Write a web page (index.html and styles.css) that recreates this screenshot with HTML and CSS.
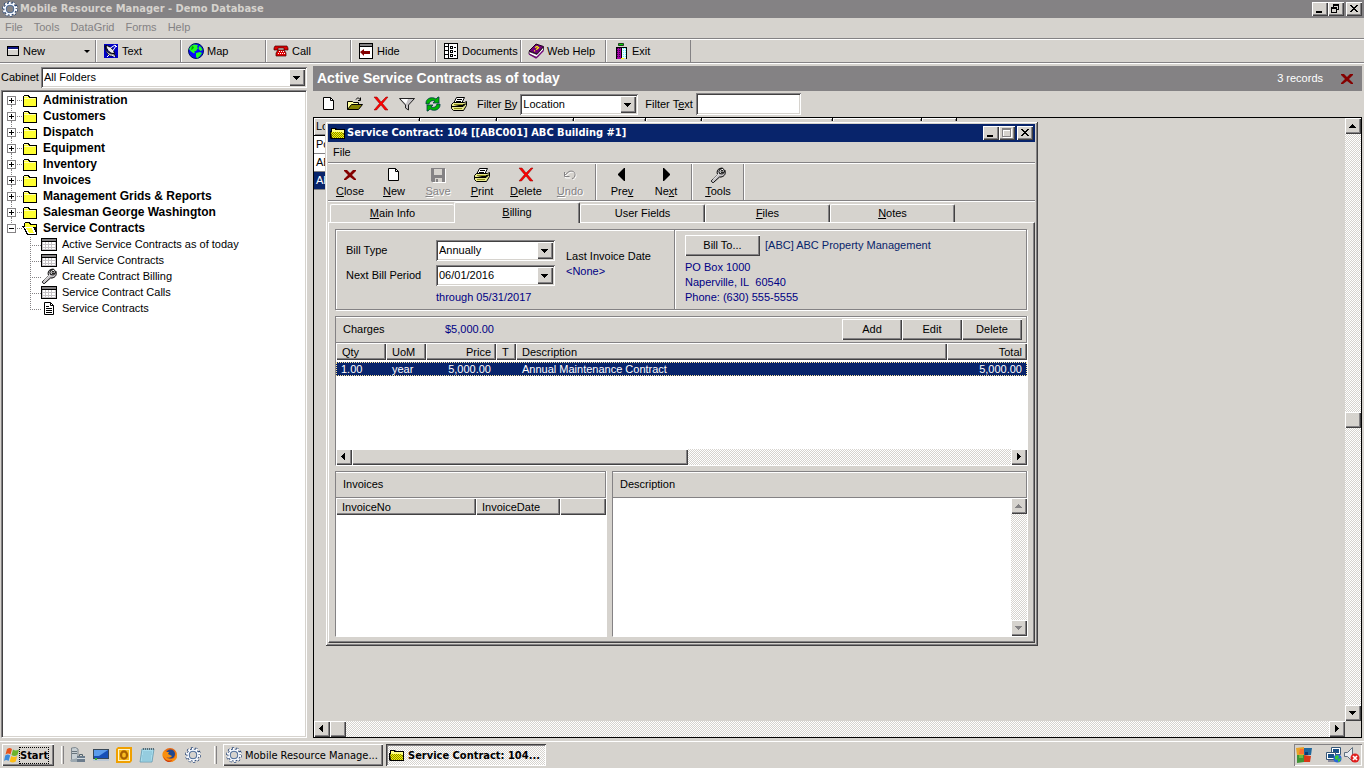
FILE: index.html
```html
<!DOCTYPE html>
<html lang="en">
<head>
  <meta charset="utf-8">
  <meta name="viewport" content="width=device-width, initial-scale=1.0">
  <title>Mobile Resource Manager - Demo Database</title>
  <link rel="stylesheet" href="styles.css">
</head>
<body>
  <!-- icon sprite -->
  <svg class="sprite" aria-hidden="true">
    <defs>
      <pattern id="p-olive" width="2" height="2" patternUnits="userSpaceOnUse">
        <path fill="#ff0" d="M0 0h2v2H0z"/><path fill="#848200" d="M0 0h1v1H0zM1 1h1v1H1z"/>
      </pattern>
    </defs>
    <symbol id="i-gear" viewBox="0 0 16 16">
      <circle cx="8" cy="8" r="6.7" fill="none" stroke="#18386b" stroke-width="2.4" stroke-dasharray="2.1 2.1"/>
      <circle cx="8" cy="8" r="5" fill="none" stroke="#18386b" stroke-width="3"/>
      <circle cx="8" cy="8" r="6" fill="none" stroke="#fff" stroke-width="2.6" stroke-dasharray="1.9 1.87"/>
      <circle cx="8" cy="8" r="4.9" fill="none" stroke="#f4f8ff" stroke-width="1.6"/>
      <circle cx="8" cy="8" r="3.8" fill="none" stroke="#5a7aa5" stroke-width=".8"/>
    </symbol>
    <symbol id="i-folder" viewBox="0 0 16 16">
      <path d="M2 3h5v1h1v1h7v10H1V4h1z"/>
      <path fill="#ffff31" d="M2 4h4v1h1v1h7v8H2z"/>
      <path fill="#ffffb5" d="M2 4h4v1H2zM2 6h11v1H2z"/>
    </symbol>
    <symbol id="i-folder-open" viewBox="0 0 16 16">
      <path d="M3 2h5v1h1v1h6v11H5v-1H4v-2H3v-2H2V8H1V7H0V6h2V3h1z"/>
      <path fill="#ffff31" d="M3 3h4v1h1v1h6v2H3z"/>
      <path fill="#fff" d="M2 7h9v1h1v2h1v2h1v2H6v-1H5v-2H4V9H3V8H2z"/>
      <path fill="#ffff31" d="M4 8h6v2h1v2h1v1H7v-1H6v-2H5V9H4z"/>
      <path d="M12 7h1v2h1v2h-1v-1h-1z"/>
    </symbol>
    <symbol id="i-folder-win" viewBox="0 0 16 16">
      <path d="M1 3h5l1 1h8v10H1L0 13V6h1z"/>
      <path fill="#ffff84" d="M2 4h3v1h9v3H2z"/>
      <path fill="url(#p-olive)" d="M1 7h11l2 2v4H2z"/>
    </symbol>
    <symbol id="i-grid" viewBox="0 0 16 16">
      <path d="M0 2h16v13H0z"/><path fill="#848284" d="M1 3h14v2H1z"/>
      <path fill="#c6c3c6" d="M1 6h14v8H1z"/>
      <path fill="#fff" d="M2 6h2v2H2zM5 6h2v2H5zM8 6h2v2H8zM11 6h3v2h-3zM2 9h2v2H2zM5 9h2v2H5zM8 9h2v2H8zM11 9h3v2h-3zM2 12h2v1H2zM5 12h2v1H5zM8 12h2v1H8zM11 12h3v1h-3z"/>
    </symbol>
    <symbol id="i-wrench" viewBox="0 0 16 16">
      <path fill="#c6c3c6" stroke="#000" d="M1.500 13.500l6-6c-1-3 0-5 2-6l3-.5-2 2.500 1 2 2 .5 1.500-2.500c1 3-.5 6-4 6.500h-1.500l-6 5.500c-1 .5-2.500-1-2-2z"/>
      <path stroke="#fff" d="M3 12.500l6-6"/>
      <path fill="#fff" stroke="#000" d="M9.500 2.500l3-1 1.500 1 .5 2-2 2.500-3-.5-.5-2z"/>
      <path fill="#d6d3ce" stroke="#000" stroke-width=".8" d="M11 3.500h2v2h-2z"/>
    </symbol>
    <symbol id="i-doc" viewBox="0 0 16 16">
      <path fill="#fff" stroke="#000" d="M3.500 2.500h6l3 3v9h-9z"/><path fill="none" stroke="#000" d="M9.500 2.500v3h3M5 6.500h3M5 8.500h6M5 10.500h6M5 12.500h6"/>
    </symbol>
    <symbol id="i-window" viewBox="0 0 16 16">
      <path d="M1 3h12v10H1z"/><path fill="#101884" d="M2 4h10v2H2z"/><path fill="#d6d3ce" d="M2 6h10v6H2z"/><path fill="#fff" d="M2 6h10v1H2z"/>
    </symbol>
    <symbol id="i-dish" viewBox="0 0 16 16">
      <path fill="#0000c6" d="M1 1h14v14H1z"/>
      <path fill="#c6c3c6" stroke="#000" stroke-width=".7" d="M2 2.500c0 5 4 9 9 8.500L13 13H7c-3-2-5-6-5-10.500z"/>
      <path fill="#e8e8e8" stroke="#000" d="M3 2.500c4 .5 8 4 8.500 8-4 .5-8-3-8.500-8z"/>
      <path fill="none" stroke="#fff" d="M6 6l6-4M9 9l4-6M12 2l2 2M6 12l-2 2M9 12l3 2"/>
    </symbol>
    <symbol id="i-globe" viewBox="0 0 16 16">
      <circle cx="8" cy="8" r="7.500" fill="#0808ff" stroke="#001060" stroke-width="1"/>
      <path fill="#21ff21" d="M3 3l3-1.500 4 .5-1 2 1 1-2 3-2 .5 1 1-1 1-3-2L1 6zM11 3l2 1 1.500 3-2 1-2-2zM8 10l4-1 2 1-2 3-3 2.500-1-2z"/>
      <path fill="#00a200" d="M4 3l2 1-1 2-2 1z"/>
    </symbol>
    <symbol id="i-phone" viewBox="0 0 16 16">
      <path fill="#e00000" stroke="#400" stroke-width=".7" d="M2 3h12l1 2v2h-4V5H5v2H1V5zM5 7h6l2 3v3H3v-3z"/>
      <path fill="#fff" d="M6 8h1v1H6zM8 8h1v1H8zM10 8h1v1h-1zM5 10h1v1H5zM7 10h1v1H7zM9 10h1v1H9zM11 10h1v1h-1z"/>
    </symbol>
    <symbol id="i-hide" viewBox="0 0 16 16">
      <path d="M1 0h14v16H1z"/><path fill="#848284" d="M2 1h12v2H2z"/><path fill="#fff" d="M2 4h12v11H2z"/>
      <path fill="#840000" d="M2 9l4-3v2h6v3H6v2z"/>
    </symbol>
    <symbol id="i-docs" viewBox="0 0 16 16">
      <path d="M1 0h14v16H1z"/><path fill="#fff" d="M2 1h3v14H2zM6 1h8v14H6z"/>
      <path d="M2 3h3v1H2zM2 7h3v1H2zM2 11h3v1H2zM7 3h3v3H7zM7 7h3v3H7zM7 11h3v3H7zM11 4h2v1h-2zM11 8h2v1h-2zM11 12h2v1h-2z"/>
      <path fill="#fff" d="M8 4h1v1H8zM8 8h1v1H8zM8 12h1v1H8z"/>
    </symbol>
    <symbol id="i-book" viewBox="0 0 16 16">
      <path fill="#73007b" stroke="#200020" d="M8 1l7.500 2.500L9 11 1 8z"/>
      <path fill="#fff" stroke="#200020" stroke-width=".8" d="M1 8.500l8 3 6.500-7.500v3L9 14.500 1 11z"/>
      <path fill="none" stroke="#73007b" stroke-width="1.200" d="M1 11l7 4 7.500-7.500"/>
      <path fill="none" stroke="#ff0" stroke-width="1.300" d="M7 4.500l2-1 1.500 1-1.500 1.500-1 .5M7 7.500l-.8.8"/>
    </symbol>
    <symbol id="i-exit" viewBox="0 0 16 16">
      <path fill="#00d600" stroke="#000" stroke-width=".7" d="M5.500 .5h5v2h-5z"/><path d="M3 4h11v12h-1V5H4v11H3z"/>
      <path fill="#a500a5" d="M4 5h4v11H4z"/><path fill="#e7ffff" d="M9 5h4v10H9z"/><path d="M8 5h1v11H8z"/>
      <path stroke="#31004a" stroke-dasharray="1 1" d="M4.500 5v10M6.500 5v10"/><path stroke="#63efff" stroke-dasharray="1 1" d="M10.500 5v10M12.500 5v10"/>
      <path fill="#ff0" d="M8 15h3v1H8z"/>
    </symbol>
    <symbol id="i-new" viewBox="0 0 16 16">
      <path fill="#fff" stroke="#000" d="M2.500 1.500h7l3 3v9h-10z"/><path fill="none" stroke="#000" d="M9.500 1.500v3h3"/>
    </symbol>
    <symbol id="i-open" viewBox="0 0 16 16">
      <path fill="#ffff9c" stroke="#000" d="M.5 13.500v-8h5l1 1h5v2"/>
      <path fill="#848200" stroke="#000" d="M.5 13.500l4-5h11l-4 5z"/>
      <path fill="none" stroke="#000" d="M9 3.500c1-2 3-2 4.500.5M13.500 1.500V4.500H11"/>
    </symbol>
    <symbol id="i-delete" viewBox="0 0 16 16">
      <path fill="#f00" stroke="#840000" stroke-width=".5" d="M1 1h3l4 5 5-5h2L9.500 7.500 15 14h-3L8 9l-4.500 5H1l5.500-6.500z"/>
    </symbol>
    <symbol id="i-close" viewBox="0 0 16 16">
      <path fill="#840000" d="M2 3h3l3 3 3-3h3v1l-4 4 4 4v1h-2L8 10l-4 3H2v-1l4-4-4-4z"/>
    </symbol>
    <symbol id="i-funnel" viewBox="0 0 16 16">
      <path fill="#c6c3c6" stroke="#212021" d="M.5 2.500h15l-6 6.500v5l-3-2V9z"/><path fill="#fff" d="M2 3h7l-2 5z"/>
    </symbol>
    <symbol id="i-refresh" viewBox="0 0 16 16">
      <path fill="#00b200" stroke="#003848" stroke-width=".8" d="M1 7c0-4 4-6 8-5l2 1 2-2h1v6H8l2-2C7 4 5 5 4 8H1zM15 9c0 4-4 6-8 5l-2-1-2 2H2V9h6l-2 2c3 1 5 0 6-3h3z"/>
    </symbol>
    <symbol id="i-print" viewBox="0 0 16 16">
      <path fill="#fff" stroke="#000" d="M5.500 1.500h8l-3 6h-8z"/><path stroke="#000" d="M6 3.500h5M5 5.500h5"/>
      <path fill="#e7e78c" stroke="#000" d="M.5 8.500l2-2h11l2-1v4l-3 5H2.500l-2-2z"/>
      <path stroke="#000" d="M1 10.500h11l3-3"/><path stroke="#8c8c18" d="M3 8.500h9M3 12.500h8"/>
    </symbol>
    <symbol id="i-save" viewBox="0 0 16 16">
      <path fill="#fff" d="M2 2h14v14H3z"/><path fill="#848284" d="M1 1h14v14H2l-1-1z"/>
      <path fill="#d6d3ce" d="M4 2h8v6H4zM5 11h7v4H5z"/><path fill="#848284" d="M6 12h2v3H6z"/>
    </symbol>
    <symbol id="i-undo" viewBox="0 0 16 16">
      <path fill="none" stroke="#fff" d="M4 9l4-3.500c3-1 6 0 6 3 0 2-1 4-3 4M3.500 6v5h5"/>
      <path fill="none" stroke="#848284" d="M3 8l4-3.500c3-1 6 0 6 3 0 2-1 4-3 4M2.500 5v4.500h5"/>
    </symbol>
    <symbol id="i-prev" viewBox="0 0 16 16"><path d="M11 1v13h-1L4 8V7l6-6z"/></symbol>
    <symbol id="i-next" viewBox="0 0 16 16"><path d="M5 1v13h1l6-6V7L6 1z"/></symbol>
    <symbol id="i-flag" viewBox="0 0 16 16">
      <path fill="#e8541c" d="M3 2c2-1.500 3-1.500 5 0L6.500 7.500c-2-1.300-3-1.300-5 0z"/>
      <path fill="#6cb42c" d="M9 2.500c2 1.300 3.500 1.300 6 0L13.500 8c-2 1.300-4 1.300-6 0z"/>
      <path fill="#3c8cdc" d="M1.200 8.500c2-1.300 3-1.300 5 0L4.500 14c-2-1.300-2.500-1.300-4.500 0z"/>
      <path fill="#fcbc14" d="M7.200 9c2 1.300 3.500 1.300 6 0l-1.500 5.500c-2 1.300-4 1.300-6 0z"/>
    </symbol>
    <symbol id="i-server" viewBox="0 0 16 16">
      <path fill="#c8d0d4" stroke="#68747c" stroke-width=".8" d="M1.500 1l4-.5L8 2v10l-5 1.500-1.500-1z"/>
      <path stroke="#68747c" d="M2 4.500h5M2 6.500h5"/><path fill="#9ca8b0" d="M0 13l8-2v4H1z"/>
      <path fill="#6c7c8c" d="M7 9h8v6H7z"/><path fill="none" stroke="#54646c" d="M9.500 9V7.500h3V9"/><path fill="#d4dce0" d="M7 11h8v1H7z"/>
    </symbol>
    <symbol id="i-desktop" viewBox="0 0 16 16">
      <path fill="#384858" d="M0 2h16v12H0z"/><path fill="#1850b8" d="M1 3h14v8H1z"/><path fill="#5c9cec" d="M1 3h14L6 9H1z"/>
      <path fill="#bcc8d4" d="M0 12h16v2H0z"/><path fill="#3cb43c" d="M2 11h2v2H2z"/>
    </symbol>
    <symbol id="i-outlook" viewBox="0 0 16 16">
      <path fill="#f0a000" d="M2 0h14v14l-2 2H0V2z"/><path fill="#fff4c8" d="M2 2h12v12H2z"/><path fill="#f8bc20" d="M3 3h10v10H3z"/>
      <ellipse cx="8" cy="8" rx="3" ry="3.600" fill="none" stroke="#a86000" stroke-width="2.200"/>
    </symbol>
    <symbol id="i-notepad" viewBox="0 0 16 16">
      <path fill="#a8dcec" stroke="#6098b0" stroke-width=".8" d="M3 2h12l-2 13H1z"/><path stroke="#78b4cc" stroke-width=".8" d="M4 5h9M4 7h9M3 9h9M3 11h9M3 13h9"/>
      <path stroke="#586870" stroke-dasharray="1 1" stroke-width="2" d="M4 2h11"/>
    </symbol>
    <symbol id="i-firefox" viewBox="0 0 16 16">
      <circle cx="8" cy="8" r="7" fill="#e86810"/><circle cx="8.500" cy="7" r="4.500" fill="#204890"/>
      <path fill="#f89010" d="M1 5l2-2 1 2 3 0-1 2 4 2c-1 2-4 2-6 1 2 3 7 3 9 0 1-2 1-4 0-6 2 2 3 5 1 8-3 4-9 4-12 0-2-2-2-5-1-7z"/>
      <path fill="#c83010" d="M1.500 9c1 4 5 6 9 4-2 2.500-5 2.500-7 .5-1-1-2-3-2-4.500z"/>
    </symbol>
    <symbol id="i-puzzle" viewBox="0 0 16 16">
      <path fill="#e8a428" d="M0 1l8-1v8H1z"/><path fill="#20689c" d="M8 1h8l-1 7H8z"/><path fill="#409434" d="M1 8h7v7l-7 1z"/><path fill="#d83818" d="M8 8l7 1-1 6H8z"/>
      <path fill="#f87030" d="M4 2h4v5L3 7z"/><path fill="#70b840" d="M3 8h4v3H3z"/><path fill="#103870" d="M9 5h3v3H9z"/>
    </symbol>
    <symbol id="i-network" viewBox="0 0 16 16">
      <path fill="#fff" stroke="#385878" d="M5.500.5h9v7h-9z"/><path fill="#185088" d="M7 2h6v4H7z"/>
      <path fill="#fff" stroke="#385878" d="M.5 5.500h9v7h-9z"/><path fill="#185088" d="M2 7h6v4H2z"/><path fill="#889" d="M2 13h7v2H2z"/>
      <circle cx="11.500" cy="11.500" r="4" fill="#2868d8"/><path fill="#38c838" d="M9 9l3-1 1 2-2 3-2-1zM12 12l3-1-1 3-2 1z"/>
    </symbol>
    <symbol id="i-mute" viewBox="0 0 16 16">
      <path fill="#e8ecf0" stroke="#607080" d="M.5 5.500h3l5-5v14l-5-5h-3z"/>
      <circle cx="11" cy="11" r="4.500" fill="#e02020"/><path stroke="#fff" stroke-width="1.700" d="M9 9l4 4M13 9l-4 4"/>
    </symbol>
    <symbol id="i-min" viewBox="0 0 16 14"><path d="M4 9h6v2H4z"/></symbol>
    <symbol id="i-max" viewBox="0 0 16 14"><path fill="#fff" fill-rule="evenodd" d="M4 3h9v9H4zM5 5v6h7V5z"/><path fill="#848284" fill-rule="evenodd" d="M3 2h9v9H3zM4 4v6h7V4z"/></symbol>
    <symbol id="i-restore" viewBox="0 0 16 14"><path fill-rule="evenodd" d="M5 2h6v6H9v3H3V5h2zM6 4v1h3v2h1V4zM4 7v3h4V7z"/></symbol>
    <symbol id="i-x" viewBox="0 0 16 14"><path d="M4 3h2v1h1v1h2V4h1V3h2v1h-1v1h-1v1H9v1h1v1h1v1h1v1h-2V9H9V8H7v1H6v1H4V9h1V8h1V7h1V6H6V5H5V4H4z"/></symbol>
    <symbol id="i-up" viewBox="0 0 16 16"><path d="M7 6h1v1h1v1h1v1h1v1H4V9h1V8h1V7h1z"/></symbol>
    <symbol id="i-down" viewBox="0 0 16 16"><path d="M4 6h7v1h-1v1H9v1H8v1H7V9H6V8H5V7H4z"/></symbol>
    <symbol id="i-left" viewBox="0 0 16 16"><path d="M9 4v7H8v-1H7V9H6V8H5V7h1V6h1V5h1V4z"/></symbol>
    <symbol id="i-right" viewBox="0 0 16 16"><path d="M6 4v7h1v-1h1V9h1V8h1V7H9V6H8V5H7V4z"/></symbol>
  </svg>

  <div class="app">
    <header class="titlebar inactive">
      <svg class="icon"><use href="#i-gear"/></svg>
      <h1>Mobile Resource Manager - Demo Database</h1>
      <div class="win-buttons">
        <button class="win-btn" aria-label="Minimize"><svg><use href="#i-min"/></svg></button>
        <button class="win-btn" aria-label="Restore"><svg><use href="#i-restore"/></svg></button>
        <button class="win-btn close" aria-label="Close"><svg><use href="#i-x"/></svg></button>
      </div>
    </header>

    <nav class="menubar disabled">
      <a href="#">File</a><a href="#">Tools</a><a href="#">DataGrid</a><a href="#">Forms</a><a href="#">Help</a>
    </nav>

    <div class="main-toolbar">
      <button class="tool first"><svg class="icon"><use href="#i-window"/></svg>New<span class="caret"></span></button>
      <button class="tool"><svg class="icon"><use href="#i-dish"/></svg>Text</button>
      <button class="tool"><svg class="icon"><use href="#i-globe"/></svg>Map</button>
      <button class="tool"><svg class="icon"><use href="#i-phone"/></svg>Call</button>
      <button class="tool"><svg class="icon"><use href="#i-hide"/></svg>Hide</button>
      <button class="tool"><svg class="icon"><use href="#i-docs"/></svg>Documents</button>
      <button class="tool"><svg class="icon"><use href="#i-book"/></svg>Web Help</button>
      <button class="tool"><svg class="icon"><use href="#i-exit"/></svg>Exit</button>
    </div>

    <div class="workspace">
      <aside class="sidebar">
        <div class="cabinet">
          <label for="cabinet">Cabinet</label>
          <span class="combo"><select id="cabinet"><option>All Folders</option></select></span>
        </div>
        <ul class="tree">
          <li><span class="node"><i class="expander plus"></i><svg class="icon"><use href="#i-folder"/></svg>Administration</span></li>
          <li><span class="node"><i class="expander plus"></i><svg class="icon"><use href="#i-folder"/></svg>Customers</span></li>
          <li><span class="node"><i class="expander plus"></i><svg class="icon"><use href="#i-folder"/></svg>Dispatch</span></li>
          <li><span class="node"><i class="expander plus"></i><svg class="icon"><use href="#i-folder"/></svg>Equipment</span></li>
          <li><span class="node"><i class="expander plus"></i><svg class="icon"><use href="#i-folder"/></svg>Inventory</span></li>
          <li><span class="node"><i class="expander plus"></i><svg class="icon"><use href="#i-folder"/></svg>Invoices</span></li>
          <li><span class="node"><i class="expander plus"></i><svg class="icon"><use href="#i-folder"/></svg>Management Grids &amp; Reports</span></li>
          <li><span class="node"><i class="expander plus"></i><svg class="icon"><use href="#i-folder"/></svg>Salesman George Washington</span></li>
          <li><span class="node"><i class="expander"></i><svg class="icon"><use href="#i-folder-open"/></svg>Service Contracts</span>
            <ul>
              <li><svg class="icon"><use href="#i-grid"/></svg>Active Service Contracts as of today</li>
              <li><svg class="icon"><use href="#i-grid"/></svg>All Service Contracts</li>
              <li><svg class="icon"><use href="#i-wrench"/></svg>Create Contract Billing</li>
              <li><svg class="icon"><use href="#i-grid"/></svg>Service Contract Calls</li>
              <li><svg class="icon"><use href="#i-doc"/></svg>Service Contracts</li>
            </ul>
          </li>
        </ul>
      </aside>

      <main class="content">
        <div class="content-header">
          <h2>Active Service Contracts as of today</h2>
          <span>3 records</span>
          <button class="flat" aria-label="Close list"><svg class="icon"><use href="#i-close"/></svg></button>
        </div>
        <div class="filter-bar">
          <button class="flat" aria-label="New"><svg class="icon"><use href="#i-new"/></svg></button>
          <button class="flat" aria-label="Open"><svg class="icon"><use href="#i-open"/></svg></button>
          <button class="flat" aria-label="Delete"><svg class="icon"><use href="#i-delete"/></svg></button>
          <button class="flat" aria-label="Filter"><svg class="icon"><use href="#i-funnel"/></svg></button>
          <button class="flat" aria-label="Refresh"><svg class="icon"><use href="#i-refresh"/></svg></button>
          <button class="flat" aria-label="Print"><svg class="icon"><use href="#i-print"/></svg></button>
          <label for="filter-by">Filter <u>B</u>y</label>
          <span class="combo"><select id="filter-by"><option>Location</option></select></span>
          <label for="filter-text">Filter T<u>e</u>xt</label>
          <input type="text" id="filter-text">
        </div>
        <div class="grid-frame">
          <div class="grid-view">
            <table class="list">
              <colgroup><col class="w106"><col class="w77"><col class="w77"><col class="w72"><col class="w56"><col class="w131"><col class="w89"><col class="w35"></colgroup>
              <thead><tr><th>Lo</th><th></th><th></th><th></th><th></th><th></th><th></th><th></th></tr></thead>
              <tbody>
                <tr><td>Po</td><td></td><td></td><td></td><td></td><td></td><td></td><td></td></tr>
                <tr><td>AB</td><td></td><td></td><td></td><td></td><td></td><td></td><td></td></tr>
                <tr class="selected"><td>AB</td><td></td><td></td><td></td><td></td><td></td><td></td><td></td></tr>
              </tbody>
            </table>
          </div>
          <div class="scroll vertical">
            <button aria-label="Scroll up"><svg><use href="#i-up"/></svg></button>
            <span class="thumb"></span>
            <button aria-label="Scroll down"><svg><use href="#i-down"/></svg></button>
          </div>
          <div class="scroll horizontal">
            <button aria-label="Scroll left"><svg><use href="#i-left"/></svg></button>
            <span class="thumb"></span>
            <button class="end" aria-label="Scroll right"><svg><use href="#i-right"/></svg></button>
          </div>
        </div>
      </main>
    </div>

    <footer class="taskbar">
      <button class="start raised"><svg class="icon"><use href="#i-flag"/></svg><span>Start</span></button>
      <i class="grip"></i>
      <div class="quick">
        <a href="#" aria-label="Server Manager"><svg class="icon"><use href="#i-server"/></svg></a>
        <a href="#" aria-label="Show Desktop"><svg class="icon"><use href="#i-desktop"/></svg></a>
        <a href="#" aria-label="Outlook"><svg class="icon"><use href="#i-outlook"/></svg></a>
        <a href="#" aria-label="Notepad"><svg class="icon"><use href="#i-notepad"/></svg></a>
        <a href="#" aria-label="Firefox"><svg class="icon"><use href="#i-firefox"/></svg></a>
        <a href="#" aria-label="Mobile Resource Manager"><svg class="icon"><use href="#i-gear"/></svg></a>
      </div>
      <i class="grip"></i>
      <button class="task raised"><svg class="icon"><use href="#i-gear"/></svg>Mobile Resource Manage...</button>
      <button class="task active"><svg class="icon"><use href="#i-folder-win"/></svg>Service Contract: 104...</button>
      <div class="tray">
        <svg class="icon"><use href="#i-puzzle"/></svg>
        <svg class="icon"><use href="#i-network"/></svg>
        <svg class="icon"><use href="#i-mute"/></svg>
      </div>
    </footer>

    <!-- service contract window -->
    <section class="dialog">
      <header class="titlebar">
        <svg class="icon"><use href="#i-folder-win"/></svg>
        <h2>Service Contract: 104 [[ABC001] ABC Building #1]</h2>
        <div class="win-buttons">
          <button class="win-btn" aria-label="Minimize"><svg><use href="#i-min"/></svg></button>
          <button class="win-btn" aria-label="Maximize" disabled><svg><use href="#i-max"/></svg></button>
          <button class="win-btn close" aria-label="Close"><svg><use href="#i-x"/></svg></button>
        </div>
      </header>
      <nav class="menubar"><a href="#">File</a></nav>
      <div class="dialog-toolbar">
        <div class="group">
          <button><svg class="icon"><use href="#i-close"/></svg><span><u>C</u>lose</span></button>
          <button><svg class="icon"><use href="#i-new"/></svg><span><u>N</u>ew</span></button>
          <button disabled><svg class="icon"><use href="#i-save"/></svg><span><u>S</u>ave</span></button>
          <button><svg class="icon"><use href="#i-print"/></svg><span><u>P</u>rint</span></button>
          <button><svg class="icon"><use href="#i-delete"/></svg><span><u>D</u>elete</span></button>
          <button disabled><svg class="icon"><use href="#i-undo"/></svg><span><u>U</u>ndo</span></button>
        </div>
        <div class="group">
          <button><svg class="icon"><use href="#i-prev"/></svg><span>Pre<u>v</u></span></button>
          <button><svg class="icon"><use href="#i-next"/></svg><span>Ne<u>x</u>t</span></button>
        </div>
        <div class="group">
          <button><svg class="icon"><use href="#i-wrench"/></svg><span><u>T</u>ools</span></button>
        </div>
      </div>

      <div class="tabs" role="tablist">
        <button role="tab"><u>M</u>ain Info</button>
        <button role="tab" class="active" aria-selected="true"><u>B</u>illing</button>
        <button role="tab">User Fields</button>
        <button role="tab"><u>F</u>iles</button>
        <button role="tab"><u>N</u>otes</button>
      </div>

      <div class="page">
        <div class="billing etched">
          <div class="bill-form">
            <label for="bill-type">Bill Type</label>
            <span class="combo"><select id="bill-type"><option>Annually</option></select></span>
            <label for="bill-period">Next Bill Period</label>
            <span class="combo"><select id="bill-period"><option>06/01/2016</option></select></span>
            <span class="through value">through 05/31/2017</span>
          </div>
          <div class="last-invoice">
            <div>Last Invoice Date</div>
            <div class="value">&lt;None&gt;</div>
          </div>
          <div class="bill-to">
            <div class="customer"><button class="raised">Bill To...</button><a href="#">[ABC] ABC Property Management</a></div>
            <address class="value">PO Box 1000<br>Naperville, IL&nbsp; 60540<br>Phone: (630) 555-5555</address>
          </div>
        </div>

        <div class="panel charges">
          <div class="panel-head">
            <span class="caption">Charges</span>
            <span class="value">$5,000.00</span>
            <div class="actions">
              <button class="raised">Add</button><button class="raised">Edit</button><button class="raised">Delete</button>
            </div>
          </div>
          <div class="panel-body">
            <table class="lines">
              <colgroup><col class="w50"><col class="w40"><col class="w70"><col class="w20"><col><col class="w80"></colgroup>
              <thead><tr><th>Qty</th><th>UoM</th><th class="num">Price</th><th>T</th><th>Description</th><th class="num">Total</th></tr></thead>
              <tbody><tr><td class="qty">1.00</td><td>year</td><td class="num">5,000.00</td><td></td><td>Annual Maintenance Contract</td><td class="num">5,000.00</td></tr></tbody>
            </table>
          </div>
          <div class="scroll horizontal">
            <button aria-label="Scroll left"><svg><use href="#i-left"/></svg></button>
            <span class="thumb wide"></span>
            <button class="end" aria-label="Scroll right"><svg><use href="#i-right"/></svg></button>
          </div>
        </div>

        <div class="bottom">
          <div class="panel invoices">
            <div class="panel-head"><span class="caption">Invoices</span></div>
            <div class="panel-body">
              <table class="lines">
                <colgroup><col class="w140"><col class="w84"><col></colgroup>
                <thead><tr><th>InvoiceNo</th><th>InvoiceDate</th><th></th></tr></thead>
              </table>
            </div>
          </div>
          <div class="panel notes">
            <div class="panel-head"><label class="caption" for="description">Description</label></div>
            <div class="panel-body memo">
              <textarea id="description"></textarea>
              <div class="scroll vertical">
                <button aria-label="Scroll up" disabled><svg><use href="#i-up"/></svg></button>
                <button aria-label="Scroll down" disabled><svg><use href="#i-down"/></svg></button>
              </div>
            </div>
          </div>
        </div>
      </div>
    </section>
  </div>
</body>
</html>
```
FILE: styles.css
```css
:root {
  --face: #d6d3ce;
  --shadow: #848284;
  --dark: #424142;
  --navy: #08246b;
  --blue: #000084;
  --ui: "Liberation Sans", Arial, sans-serif;
  --caption: "DejaVu Sans Condensed", "DejaVu Sans", Tahoma, sans-serif;
  --raised: inset 1px 1px #fff, inset -1px -1px var(--dark), inset -2px -2px var(--shadow);
  --dither: repeating-conic-gradient(#fff 0 25%, var(--face) 0 50%) 0 0 / 2px 2px;
}

* {
  box-sizing: border-box;
}

body {
  margin: 0;
  background: var(--face);
  color: #000;
  font: 11px/15px var(--ui);
}

h1, h2 {
  margin: 0;
  font-size: 11px;
}

ul {
  list-style: none;
  margin: 0;
  padding: 0;
}

a {
  color: inherit;
  text-decoration: none;
}

button, select, input, textarea {
  margin: 0;
  padding: 0;
  border: 0;
  border-radius: 0;
  font: inherit;
  color: inherit;
  background: var(--face);
}

.sprite {
  position: absolute;
  width: 0;
  height: 0;
}

svg {
  display: block;
}

.icon {
  width: 16px;
  height: 16px;
  flex: none;
}

.raised {
  background: var(--face);
  box-shadow: var(--raised);
}

.value {
  color: var(--blue);
}

.app {
  position: relative;
  display: flex;
  flex-direction: column;
  height: 100vh;
  overflow: hidden;
}

/* title bars */
.titlebar {
  display: flex;
  align-items: center;
  gap: 2px;
  height: 18px;
  padding: 0 2px;
  background: var(--navy);
  color: #fff;
}

.titlebar h1, .titlebar h2 {
  flex: 1;
  font: bold 11px/18px var(--caption);
  white-space: nowrap;
}

.titlebar.inactive {
  background: var(--shadow);
  color: var(--face);
}

.win-buttons {
  display: flex;
}

.win-btn {
  width: 16px;
  height: 14px;
  box-shadow: var(--raised);
}

.win-btn.close {
  margin-left: 2px;
}

.win-btn svg {
  width: 16px;
  height: 14px;
}

/* menus */
.menubar {
  display: flex;
  gap: 11px;
  height: 20px;
  padding: 0 5px;
  line-height: 20px;
}

.menubar.disabled {
  color: var(--shadow);
  line-height: 18px;
}

/* main toolbar */
.main-toolbar {
  display: flex;
  height: 26px;
  border-top: 1px solid var(--shadow);
  border-bottom: 1px solid #fff;
  box-shadow: inset 0 1px #fff, inset 0 -1px var(--shadow);
  padding: 1px 0;
}

.tool {
  display: flex;
  align-items: center;
  gap: 3px;
  width: 85px;
  padding-left: 6px;
  border-left: 1px solid #fff;
  border-right: 1px solid var(--shadow);
  text-align: left;
  white-space: nowrap;
}

.tool.first {
  gap: 1px;
  width: 96px;
  border-left: 0;
}

.caret {
  margin-left: auto;
  margin-right: 5px;
  border: 3px solid transparent;
  border-top-color: #000;
  border-bottom: 0;
}

/* drop-downs */
.combo {
  position: relative;
  display: flex;
  height: 21px;
}

.combo select, .filter-bar input {
  appearance: none;
  width: 100%;
  height: 100%;
  padding: 0 3px;
  background: #fff;
  box-shadow: inset 1px 1px var(--shadow), inset -1px -1px #fff, inset 2px 2px var(--dark), inset -2px -2px var(--face);
}

.combo::after {
  content: "";
  position: absolute;
  top: 2px;
  right: 2px;
  bottom: 2px;
  width: 16px;
  background: linear-gradient(#000, #000) 4px 7px / 7px 1px no-repeat,
    linear-gradient(#000, #000) 5px 8px / 5px 1px no-repeat,
    linear-gradient(#000, #000) 6px 9px / 3px 1px no-repeat,
    linear-gradient(#000, #000) 7px 10px / 1px 1px no-repeat,
    var(--face);
  box-shadow: var(--raised);
  pointer-events: none;
}

/* layout */
.workspace {
  display: flex;
  flex: 1;
  gap: 6px;
  min-height: 0;
  padding: 2px 2px 2px 1px;
}

.sidebar {
  display: flex;
  flex-direction: column;
  width: 306px;
  padding-top: 1px;
  gap: 2px;
}

.cabinet {
  display: flex;
  align-items: center;
}

.cabinet label {
  width: 40px;
}

.cabinet .combo {
  flex: 1;
}

.tree {
  flex: 1;
  padding-left: 4px;
  background: #fff;
  border: 1px solid;
  border-color: var(--shadow) #fff #fff var(--shadow);
  box-shadow: inset 1px 1px var(--dark), inset -1px -1px var(--face);
}

.tree li {
  position: relative;
  line-height: 16px;
  white-space: nowrap;
}

.node {
  display: flex;
  align-items: center;
  height: 16px;
  font-size: 12px;
  font-weight: bold;
}

.tree > li:first-child {
  margin-top: 1px;
}

.tree > li:not(:last-child)::before {
  content: "";
  position: absolute;
  left: 5px;
  top: 13px;
  height: 6px;
  border-left: 1px dotted var(--shadow);
}

.expander {
  width: 9px;
  height: 9px;
  margin: 0 6px 0 1px;
  border: 1px solid var(--shadow);
  background: linear-gradient(#000, #000) center / 5px 1px no-repeat;
  position: relative;
}

.expander.plus {
  background: linear-gradient(#000, #000) center / 5px 1px no-repeat,
    linear-gradient(#000, #000) center / 1px 5px no-repeat;
}

.expander::after {
  content: "";
  position: absolute;
  left: 9px;
  top: 3px;
  width: 5px;
  border-top: 1px dotted var(--shadow);
}

.node .icon {
  margin-right: 5px;
}

.tree ul li {
  display: flex;
  align-items: center;
  gap: 5px;
  height: 16px;
  padding-left: 35px;
}

.tree ul li::before {
  content: "";
  position: absolute;
  left: 24px;
  top: -7px;
  width: 10px;
  height: 16px;
  border-left: 1px dotted var(--shadow);
  border-bottom: 1px dotted var(--shadow);
}

.tree ul li:first-child::before {
  top: 1px;
  height: 8px;
}

.content {
  display: flex;
  flex: 1;
  flex-direction: column;
  min-width: 0;
}

.content-header {
  display: flex;
  align-items: center;
  height: 25px;
  padding: 0 7px 0 4px;
  background: var(--shadow);
  color: #fff;
}

.content-header h2 {
  flex: 1;
  font-size: 14px;
}

.flat {
  background: none;
}

.content-header .flat {
  margin-left: 16px;
}

.filter-bar {
  display: flex;
  align-items: center;
  height: 26px;
  padding: 0 8px;
}

.filter-bar .flat {
  margin-right: 10px;
}

.filter-bar label {
  margin-right: 3px;
}

.filter-bar .combo {
  width: 118px;
  margin-right: 7px;
}

.filter-bar input {
  width: 105px;
  height: 22px;
}

.grid-frame {
  display: grid;
  flex: 1;
  grid-template: 1fr 16px / 1fr 16px;
  border: 1px solid #000;
  min-height: 0;
}

.grid-view {
  overflow: hidden;
}

/* tables */
table {
  table-layout: fixed;
  border-collapse: separate;
  border-spacing: 0;
}

th, td {
  padding: 0 5px;
  font-weight: normal;
  text-align: left;
  white-space: nowrap;
  overflow: hidden;
}

th {
  background: var(--face);
}

.num {
  text-align: right;
}

.list {
  width: 643px;
}

.list th, .list td {
  height: 18px;
  padding: 0 2px;
  border-right: 1px solid #000;
  border-bottom: 1px solid var(--shadow);
}

.list th {
  border-bottom-color: #000;
  box-shadow: inset 1px 1px #fff, inset -1px -1px var(--shadow);
}

.list td {
  background: #fff;
}

.list .selected td {
  background: var(--navy);
  color: #fff;
}

.lines {
  width: 100%;
}

.lines th {
  height: 19px;
  padding: 1px 5px 0 6px;
  border-bottom: 2px solid #fff;
  box-shadow: var(--raised);
}

.lines td {
  height: 14px;
  padding: 0 5px 0 6px;
  line-height: 14px;
}

.lines .qty {
  padding-left: 5px;
}

.lines tbody tr {
  background: var(--navy);
  color: #fff;
  outline: 1px dotted #ffe79c;
  outline-offset: -1px;
}

.w20 { width: 20px; }
.w35 { width: 35px; }
.w40 { width: 40px; }
.w50 { width: 50px; }
.w56 { width: 56px; }
.w70 { width: 70px; }
.w72 { width: 72px; }
.w77 { width: 77px; }
.w80 { width: 80px; }
.w84 { width: 84px; }
.w89 { width: 89px; }
.w106 { width: 106px; }
.w131 { width: 131px; }
.w140 { width: 140px; }

/* scroll bars */
.scroll {
  display: flex;
  background: var(--dither);
}

.scroll.vertical {
  flex-direction: column;
  justify-content: space-between;
  width: 16px;
}

.scroll.horizontal {
  height: 16px;
}

.scroll button, .thumb {
  width: 16px;
  height: 16px;
  background: var(--face);
  box-shadow: var(--raised);
}

.scroll button svg {
  width: 16px;
  height: 16px;
}

.scroll button:disabled svg {
  fill: var(--shadow);
}

.scroll .end {
  margin-left: auto;
}

.scroll .wide {
  width: 336px;
}

/* dialog */
.dialog {
  position: absolute;
  top: 121px;
  left: 325px;
  display: flex;
  flex-direction: column;
  width: 713px;
  height: 525px;
  padding: 3px;
  background: var(--face);
  box-shadow: inset 1px 1px var(--face), inset -1px -1px var(--dark), inset 2px 2px #fff, inset -2px -2px var(--shadow);
}

.dialog .titlebar {
  gap: 1px;
}

.dialog-toolbar {
  display: flex;
  height: 40px;
  border-top: 1px solid var(--shadow);
  border-bottom: 1px solid #fff;
  box-shadow: inset 0 1px #fff, inset 0 -1px var(--shadow);
  padding: 1px 0;
}

.group {
  display: flex;
  padding: 0 3px 0 4px;
  border-right: 1px solid var(--shadow);
  box-shadow: 1px 0 #fff;
}

.group:first-child {
  padding-left: 0;
}

.group button {
  display: flex;
  flex-direction: column;
  align-items: center;
  gap: 1px;
  width: 44px;
  padding-top: 3px;
  background: none;
}

.group button:disabled {
  color: var(--shadow);
  text-shadow: 1px 1px #fff;
}

.tabs {
  display: flex;
  align-items: flex-end;
  height: 20px;
  padding-left: 2px;
}

.tabs button {
  width: 125px;
  height: 18px;
  border-top: 1px solid #fff;
  border-left: 1px solid #fff;
  border-right: 1px solid var(--dark);
  border-radius: 2px 2px 0 0;
  box-shadow: inset -1px 0 var(--shadow);
}

.tabs button:first-child {
  width: 124px;
  border-right: 0;
  box-shadow: none;
}

.tabs .active {
  width: 126px;
  height: 21px;
  margin-bottom: -1px;
  padding-bottom: 1px;
  position: relative;
}

.page {
  display: flex;
  flex: 1;
  flex-direction: column;
  gap: 5px;
  padding: 6px 6px 5px 6px;
  border: 1px solid #fff;
  border-right-color: var(--dark);
  border-bottom-color: var(--dark);
  box-shadow: inset -1px -1px var(--shadow);
}

.etched {
  border: 1px solid var(--shadow);
  box-shadow: inset 1px 1px #fff, 1px 1px #fff;
}

.billing {
  display: flex;
  height: 81px;
  margin: 0 1px 1px 0;
}

.bill-form {
  display: grid;
  grid-template-columns: 90px 119px;
  grid-auto-rows: 21px;
  row-gap: 4px;
  align-content: start;
  align-items: center;
  padding: 10px 0 0 10px;
}

.through {
  grid-column: 2;
  margin-top: -6px;
}

.last-invoice {
  flex: none;
  width: 120px;
  padding: 19px 0 0 11px;
  border-right: 1px solid var(--shadow);
}

.bill-to {
  flex: 1;
  padding: 5px 9px;
  border-left: 1px solid #fff;
}

.customer {
  display: flex;
  align-items: center;
  gap: 5px;
  height: 21px;
  margin-bottom: 4px;
  color: var(--navy);
}

.customer button {
  width: 75px;
  height: 21px;
  color: #000;
}

address {
  font-style: normal;
}

.panel {
  display: flex;
  flex-direction: column;
  background: #fff;
  border-left: 1px solid var(--shadow);
  border-bottom: 1px solid #fff;
  border-right: 1px solid #fff;
}

.panel-head {
  display: flex;
  align-items: center;
  height: 27px;
  padding: 0 4px 0 7px;
  background: var(--face);
  border: 1px solid var(--shadow);
  border-left: 0;
  box-shadow: inset 0 1px #fff;
}

.panel-body {
  flex: 1;
}

.charges {
  height: 150px;
}

.charges .caption {
  width: 102px;
}

.actions {
  display: flex;
  margin-left: auto;
}

.actions button {
  width: 60px;
  height: 21px;
}

.bottom {
  display: grid;
  flex: 1;
  grid-template-columns: 272px 1fr;
  gap: 5px;
}

.memo {
  display: flex;
}

.memo textarea {
  flex: 1;
  background: #fff;
  resize: none;
}

/* taskbar */
.taskbar {
  display: flex;
  align-items: center;
  height: 28px;
  padding: 2px 2px 0;
  box-shadow: inset 0 1px var(--face), inset 0 2px #fff;
  font-family: var(--caption);
}

.taskbar button {
  display: flex;
  align-items: center;
  gap: 3px;
  height: 22px;
  padding-left: 3px;
  white-space: nowrap;
}

.start {
  width: 52px;
  font-weight: bold;
}

.taskbar .start {
  gap: 0;
  padding-left: 2px;
}

.start span {
  outline: 1px dotted #000;
}

.grip {
  width: 3px;
  height: 18px;
  margin: 0 6px 0 7px;
  box-shadow: inset 1px 0 #fff, inset -1px 0 var(--shadow);
}

.quick {
  display: flex;
  gap: 7px;
  margin-right: 6px;
}

.task {
  width: 160px;
  margin-right: 3px;
}

.task.active {
  background: var(--dither);
  box-shadow: inset 1px 1px var(--dark), inset -1px -1px #fff, inset 2px 2px var(--shadow);
  font-weight: bold;
}

.tray {
  display: flex;
  align-items: center;
  width: 68px;
  height: 22px;
  margin-left: auto;
  padding: 0 2px;
  box-shadow: inset 1px 1px var(--shadow), inset -1px -1px #fff;
}

.tray .icon:first-child {
  margin-right: auto;
}

.tray .icon:last-child {
  margin-left: 2px;
}
```
